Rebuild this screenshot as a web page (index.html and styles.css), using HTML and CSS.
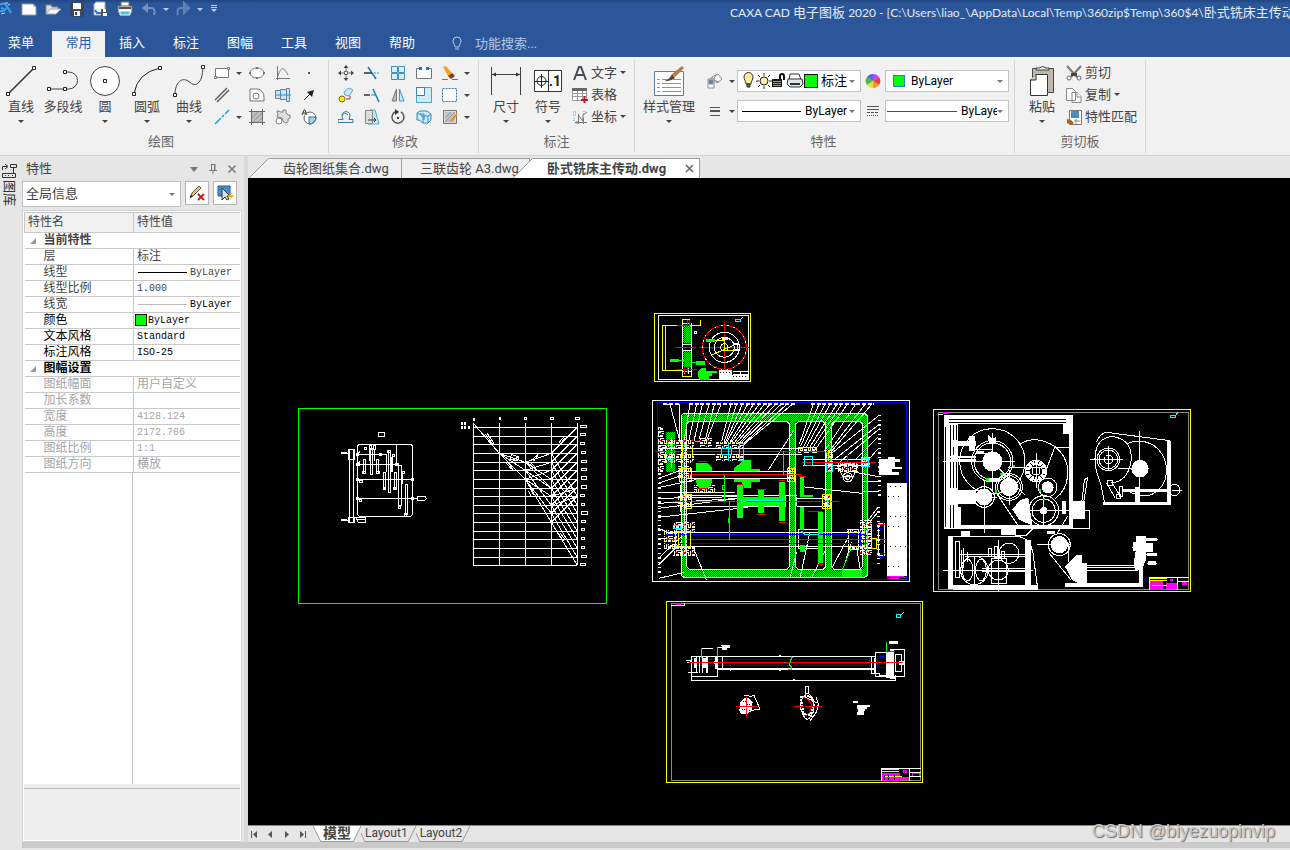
FILE: index.html
```html
<!DOCTYPE html>
<html lang="zh-CN">
<head>
<meta charset="utf-8">
<title>CAXA CAD 电子图板 2020</title>
<link rel="stylesheet" href="styles.css">
</head>
<body>
<header class="top">
  <div class="titlebar">
    <div class="quick">
      <svg class="logo" width="12" height="18" viewBox="0 0 12 18" fill="none"><path d="M0 5q5-4 8 3l3 5M0 11q5 1 7-4M1 8l3 1" stroke="#38a3f2" stroke-width="2"/><path d="M5 3l3 0M8 5l2-1M1 14l4-1" stroke="#b9dcf7"/></svg>
      <button aria-label="新建"><svg width="18" height="18" viewBox="0 0 18 18"><path d="M2 4h11l3 3v8H2z" fill="#fff" stroke="#999"/><path d="M13 4v3h3" fill="#ccc"/></svg></button>
      <button aria-label="打开"><svg width="18" height="18" viewBox="0 0 18 18"><path d="M2 14V5h5l1 2h6v2" fill="#ddd" stroke="#888"/><path d="M2 14l4-5h11l-5 5z" fill="#f4f4f4" stroke="#aaa"/></svg></button>
      <button aria-label="保存"><svg width="18" height="18" viewBox="0 0 18 18"><path d="M3 3h12v13H3z" fill="#444b56" stroke="#363b43"/><path d="M5 3h8v6H5z" fill="#fff"/><path d="M6 11h6v5H6z" fill="#eee"/><path d="M7 12h2v3H7z" fill="#444"/></svg></button>
      <button aria-label="另存为"><svg width="18" height="18" viewBox="0 0 18 18"><path d="M4 2h9v13H2V4z" fill="#fff" stroke="#aaa"/><path d="M3 10l2 3 4 0" fill="none" stroke="#2879bb" stroke-width="2"/><path d="M9 9h7v7H9z" fill="#555"/><path d="M11 9h3v3h-3zM11 13h4v3h-4z" fill="#fff"/></svg></button>
      <button aria-label="打印"><svg width="18" height="18" viewBox="0 0 18 18"><path d="M5 2h8v5H5z" fill="#fff" stroke="#777"/><path d="M2 6h14v7H2z" fill="#eee" stroke="#656565"/><path d="M3 8h12" stroke="#555" stroke-width="2"/><path d="M4 11h10v4H4z" fill="#43c4eb" stroke="#fff"/></svg></button>
      <button aria-label="撤销"><svg width="18" height="18" viewBox="0 0 18 18"><path d="M3 8h8q5 0 3 7" fill="none" stroke="#7691bf" stroke-width="2"/><path d="M2 8l6-5v10z" fill="#7691bf"/></svg></button>
      <button class="caret" aria-label="撤销列表"><i class="arrow pale"></i></button>
      <button aria-label="重做"><svg width="18" height="18" viewBox="0 0 18 18"><path d="M15 8H7q-5 0-3 7" fill="none" stroke="#6583b7" stroke-width="2"/><path d="M15 8l-5-5v10z" fill="none" stroke="#6583b7" stroke-width="2"/></svg></button>
      <button class="caret" aria-label="重做列表"><i class="arrow pale"></i></button>
      <button class="caret more" aria-label="自定义工具栏"><svg width="8" height="8" viewBox="0 0 8 8"><path d="M1 .5h6M1 2.500h6" stroke="#c5cfe0"/><path d="M1 4h6L4 7z" fill="#c5cfe0"/></svg></button>
    </div>
    <h1>CAXA CAD <span>电子图板</span> 2020 - [C:\Users\liao_\AppData\Local\Temp\360zip$Temp\360$4\<span>卧式铣床主传动</span>.dwg]</h1>
  </div>
  <nav class="menu">
    <button>菜单</button><button class="on">常用</button><button>插入</button><button>标注</button><button>图幅</button><button>工具</button><button>视图</button><button>帮助</button>
    <label class="search"><svg width="12" height="16" viewBox="0 0 12 16" fill="none" stroke="#b6c7e2"><path d="M4 11C4 8 2 8 2 5a4 4 0 018 0c0 3-2 3-2 6zM4 13h4"/></svg><input type="text" placeholder="功能搜索..." aria-label="功能搜索"></label>
  </nav>
</header>

<section class="ribbon">
  <div class="group draw">
    <div class="group-body">
      <button class="big"><svg width="32" height="32" viewBox="0 0 32 32"><path d="M3 29L29 3" stroke="#33363f" stroke-width="1.6"/><g class="node"><path d="M1.500 27.500h3v3h-3zM27.500 1.500h3v3h-3z"/></g></svg>直线<i class="arrow"></i></button>
      <button class="big"><svg width="32" height="32" viewBox="0 0 32 32"><path d="M2 24h20a8.500 8.500 0 000-17h-4" fill="none" stroke="#444"/><g class="node"><path d="M.5 22.500h3v3h-3zM16.500 22.500h3v3h-3zM16.500 5.500h3v3h-3z"/></g></svg>多段线<i class="arrow none"></i></button>
      <button class="big"><svg width="32" height="32" viewBox="0 0 32 32"><circle cx="16" cy="16" r="14.500" fill="#fff" stroke="#40424a"/><path class="node" d="M14.500 14.500h3v3h-3z"/></svg>圆<i class="arrow"></i></button>
      <button class="big"><svg width="32" height="32" viewBox="0 0 32 32"><path d="M3 29Q6 8 29 3" fill="none" stroke="#222"/><path class="node" d="M1.500 27.500h3v3h-3zM27.500 1.500h3v3h-3z"/></svg>圆弧<i class="arrow"></i></button>
      <button class="big"><svg width="32" height="32" viewBox="0 0 32 32"><path d="M2 30C2 17 9 12 15 16c5 4 8 5 11 1 3-3 3-7 4-14" fill="none" stroke="#444"/><path class="node" d="M.5 28.500h3v3h-3zM28.500 .5h3v3h-3z"/></svg>曲线<i class="arrow"></i></button>
      <div class="small-grid draw-grid">
        <button aria-label="矩形"><svg width="16" height="16" viewBox="0 0 16 16"><path d="M1.500 3.500h13v9h-13z" fill="#fff" stroke="#777"/><path d="M.5 11.500h2v2h-2zM13.500 2.500h2v2h-2z" fill="#eee" stroke="#777"/></svg><i class="arrow"></i></button>
        <button aria-label="椭圆"><svg width="16" height="16" viewBox="0 0 16 16"><ellipse cx="8" cy="8" rx="7" ry="5" fill="#fff" stroke="#777"/><path d="M7 2h2v2H7zM7 12h2v2H7zM0 7h2v2H0zM14 7h2v2h-2z" fill="#777"/></svg></button>
        <button aria-label="公式曲线"><svg width="16" height="16" viewBox="0 0 16 16" fill="none" stroke="#777"><path d="M2.500 1v14M1 13.500h14M3 11C6 1 9 2 13 10"/></svg></button>
        <button aria-label="点"><svg width="16" height="16" viewBox="0 0 16 16"><path d="M7 7h2v2H7z" fill="#555"/></svg></button>
        <button aria-label="平行线"><svg width="16" height="16" viewBox="0 0 16 16" stroke="#555" stroke-width="1.300"><path d="M1 13L13 1M3 15L15 3"/></svg></button>
        <button aria-label="轮廓"><svg width="16" height="16" viewBox="0 0 16 16" fill="#fff" stroke="#777"><path d="M1 2h8q6 2 6 8v4H1z"/><circle cx="7" cy="9" r="3"/></svg></button>
        <button aria-label="轴"><svg width="16" height="16" viewBox="0 0 16 16" fill="#c9e5f8" stroke="#6c829a"><path d="M.5 3.500h5v8h-5zM5.500 2.500h6v10h-6zM11.500 1.500h3v13h-3z"/><path d="M0 8h16" stroke="#2490db"/></svg></button>
        <button aria-label="箭头"><svg width="16" height="16" viewBox="0 0 16 16"><path d="M3 13l6-6" stroke="#222"/><path d="M13 3l-2 7-5-5z" fill="#222"/></svg></button>
        <button aria-label="构造线"><svg width="16" height="16" viewBox="0 0 16 16"><path d="M1 15l6-6M8 8l2-2M11 5l4-4" stroke="#1ba1e2" stroke-width="1.500"/></svg><i class="arrow"></i></button>
        <button aria-label="填充"><svg width="16" height="16" viewBox="0 0 16 16"><path d="M3 3h10v10H3z" fill="#bdbdbd"/><path d="M2.500 0v16M0 2.500h16M13.500 0v16M0 13.500h16" stroke="#666"/><path d="M3 9l6-6M4 13l9-9M9 13l4-4" stroke="#999"/></svg></button>
        <button aria-label="齿轮"><svg width="16" height="16" viewBox="0 0 16 16" fill="#ddd" stroke="#7d8389"><path d="M2 2h2l1 1h3V1h3v3l2 2h2v3l-2 1v3l-3 1-2-2-1-3-5-1 1-3-1-2z"/><circle cx="4" cy="12" r="3" fill="#fff"/></svg></button>
        <button aria-label="局部放大"><svg width="16" height="16" viewBox="0 0 16 16" fill="#fff" stroke="#4d6577"><circle cx="9" cy="9" r="6"/><path d="M8 8h7a7 7 0 01-7 7z" fill="#9bd8f3"/><path d="M1 6l2-5h1l2 5M2 4h3" stroke="#333" fill="none"/></svg></button>
      </div>
    </div>
    <div class="group-name">绘图</div>
  </div>
  <div class="group modify">
    <div class="group-body">
      <div class="small-grid modify-grid">
        <button aria-label="平移"><svg width="16" height="16" viewBox="0 0 16 16"><path d="M8 0l2.500 3h-5zM8 16l2.500-3h-5zM0 8l3-2.500v5zM16 8l-3-2.500v5z" fill="#444"/><path d="M6.500 6.500h3v3h-3z" fill="#fff" stroke="#666"/><path d="M8 3v3M8 10v3M3 8h3M10 8h3" stroke="#777"/></svg></button>
        <button aria-label="裁剪"><svg width="16" height="16" viewBox="0 0 16 16" stroke-width="1.500"><path d="M4 2l8 12" stroke="#1778be"/><path d="M0 8h8" stroke="#333"/><path d="M10 8h6" stroke="#49b6ed" stroke-dasharray="2 1"/></svg></button>
        <button aria-label="阵列"><svg width="16" height="16" viewBox="0 0 16 16" fill="#d4effb" stroke="#4490bd"><path d="M1.500 1.500h6v6h-6zM8.500 1.500h6v6h-6zM1.500 8.500h6v6h-6zM8.500 8.500h6v6h-6z"/></svg></button>
        <button aria-label="打断"><svg width="16" height="16" viewBox="0 0 16 16"><path d="M5 3.500H.5v10h15v-10H11" fill="#fff" stroke="#777"/><path d="M3 2h3v3H3zM10 2h3v3h-3z" fill="#1878ba"/></svg></button>
        <button aria-label="删除"><svg width="16" height="16" viewBox="0 0 16 16"><path d="M1 2l3-1 6 7-4 3z" fill="#f7a316"/><path d="M6 11l4-3 3 3-4 3z" fill="#833c27"/><path d="M0 14.500h6M10 14.500h6" stroke="#777"/></svg><i class="arrow"></i></button>
        <button aria-label="复制"><svg width="16" height="16" viewBox="0 0 16 16"><circle cx="4" cy="12" r="3" fill="#ffec00" stroke="#776d22"/><path d="M6 5l5-4 4 2-4 6-4-1z" fill="#c8e9fa" stroke="#4bacd9"/><path d="M8 12h4V9" fill="none" stroke="#b52628"/></svg></button>
        <button aria-label="延伸"><svg width="16" height="16" viewBox="0 0 16 16" stroke-width="1.500"><path d="M9 2l6 13" stroke="#1778be"/><path d="M0 8h6" stroke="#333"/><path d="M7 8h4" stroke="#49b6ed"/></svg></button>
        <button aria-label="镜像"><svg width="16" height="16" viewBox="0 0 16 16"><path d="M6.500 2v12H2z" fill="#bcbcbc" stroke="#777"/><path d="M9.500 2v12H14z" fill="#bfe9fd" stroke="#4297c0"/></svg></button>
        <button aria-label="缩放"><svg width="16" height="16" viewBox="0 0 16 16"><path d="M.5 .5h15v15H.5z" fill="#ccecf9" stroke="#4f9eca"/><path d="M.5 .5h8v8h-8z" fill="#fff" stroke="#3c7fa8"/></svg></button>
        <button aria-label="分解"><svg width="16" height="16" viewBox="0 0 16 16"><path d="M.5 1.500h14v13H.5z" fill="#fff" stroke="#3b75a0" stroke-dasharray="2 1"/></svg><i class="arrow"></i></button>
        <button aria-label="等距线"><svg width="16" height="16" viewBox="0 0 16 16" fill="none" stroke="#367ba6"><path d="M0 13.500h15v-3h-4q3-7-3-8-6 1-3 8H0v3M4 7q2-5 6-1"/></svg></button>
        <button aria-label="拉伸"><svg width="16" height="16" viewBox="0 0 16 16"><path d="M6 1h5l4 14H4z" fill="#c9eafa" stroke="#4da8d0"/><path d="M1.500 1.500h7v13h-7z" fill="#ddd" stroke="#888"/><path d="M4 11h8M10 9l2 2-2 2" fill="none" stroke="#333"/></svg></button>
        <button aria-label="旋转"><svg width="16" height="16" viewBox="0 0 16 16"><path d="M6 2.500a6 6 0 105 .5" fill="none" stroke="#555" stroke-width="1.500"/><path d="M5 0l4 3-4 3z" fill="#333"/><path d="M7 8h2v2H7z" fill="#333"/></svg></button>
        <button aria-label="块"><svg width="16" height="16" viewBox="0 0 16 16" fill="#cceefb" stroke="#3589bb"><path d="M1 4l3-2h7l4 3v6l-3 3H7l-4-3H1zM1 5h7v6M5 7h7l3-2M7 14V8l-3-3M12 14V7"/></svg></button>
        <button aria-label="编辑填充"><svg width="16" height="16" viewBox="0 0 16 16"><path d="M1.500 1.500h13v13h-13z" fill="#ddd" stroke="#777"/><path d="M3 3h10v10H3z" fill="#c2c2c2"/><path d="M3 9l6-6M3 13L13 3M7 13l6-6" stroke="#999"/><path d="M9 12l6-7" stroke="#e99020" stroke-width="2"/></svg><i class="arrow"></i></button>
      </div>
    </div>
    <div class="group-name">修改</div>
  </div>
  <div class="group annotate">
    <div class="group-body">
      <button class="big"><svg width="32" height="32" viewBox="0 0 32 32"><path d="M1.500 2v28M30.500 2v28M2 9.500h28" stroke="#3d424a"/><path d="M2 9.500l4-2v4zM30 9.500l-4-2v4z" fill="#333"/></svg>尺寸<i class="arrow"></i></button>
      <button class="big"><svg width="32" height="32" viewBox="0 0 32 32"><path d="M2.500 5.500h27v21h-27zM16.500 5v21" fill="#fff" stroke="#333"/><circle cx="9.500" cy="16" r="4.500" fill="none" stroke="#222"/><path d="M3 16.500h13M9.500 9v14" stroke="#222"/><text x="17" y="21" font-size="14" font-weight="700" fill="#222">.1</text></svg>符号<i class="arrow"></i></button>
      <div class="small-list">
        <button><svg width="16" height="16" viewBox="0 0 16 16" fill="none" stroke="#444b54" stroke-width="2"><path d="M2 15L7 2h2l5 13M4 10h8"/></svg>文字<i class="arrow"></i></button>
        <button><svg width="16" height="16" viewBox="0 0 16 16"><path d="M.5 1.500h14v12H.5zM1 6.500h14M1 9.500h14M5.500 2v12M10.500 2v12" fill="#fff" stroke="#999"/><path d="M0 1h15v3H0z" fill="#666"/><path d="M9 13h7M12.500 9v7" stroke="#b62126" stroke-width="2"/></svg>表格</button>
        <button><svg width="16" height="16" viewBox="0 0 16 16" fill="none" stroke="#777"><path d="M6.500 5v10M3 13.500h12M7 7l4 5V6l4-3M11.500 9v6"/><path d="M1 3h3M1 6h3M2 9v4M5 15v-3M12 2v4" stroke="#4a99cc" stroke-dasharray="1 1"/></svg>坐标<i class="arrow"></i></button>
      </div>
    </div>
    <div class="group-name">标注</div>
  </div>
  <div class="group props">
    <div class="group-body">
      <button class="big"><svg width="32" height="32" viewBox="0 0 32 32"><path d="M1.500 6.500h29v24h-29z" fill="#fff" stroke="#607e9b"/><path d="M4 14.500h3M4 18.500h3M4 22.500h3M4 26.500h3M9 14.500h7M20 14.500h8M9 18.500h19M9 22.500h19M9 26.500h19" stroke="#8297ab"/><path d="M29 1l2 2-9 9-3-3z" fill="#b8793d"/><path d="M19 9l3 4q-5 4-10 3 5-2 7-7z" fill="#664027"/></svg>样式管理<i class="arrow"></i></button>
      <div class="prop-grid">
        <button aria-label="图层"><svg width="16" height="16" viewBox="0 0 16 16" fill="#fff" stroke="#8a8a8a"><path d="M5 4l6-3 4 5-5 4zM5 4l-3 4 5 2M9 2l-3 5 6 2"/><path d="M1 6h6v9H1z"/><path d="M2 7h4v4H2z" fill="#4e83a9"/></svg><i class="arrow"></i></button>
        <div class="combo layer">
          <svg width="14" height="18" viewBox="0 0 14 18"><path d="M4 12C4 9 2 8 2 5a4.500 4.500 0 019 0c0 3-2 4-2 7z" fill="#ffed96" stroke="#333"/><path d="M5 12h3v3H5z" fill="#777" stroke="#222"/></svg>
          <svg width="16" height="18" viewBox="0 0 16 18"><circle cx="8" cy="9" r="4" fill="#ffefab" stroke="#222"/><path d="M8 1v3M8 14v3M0 9h3M13 9h3M2 3l2 2M12 13l2 2M2 15l2-2M12 5l2-2" stroke="#333"/></svg>
          <svg width="14" height="18" viewBox="0 0 14 18"><path d="M8 9V4q0-2 2-2t2 2v4" fill="none" stroke="#111" stroke-width="2"/><path d="M0 7h10v8H0z" fill="#17170d"/><path d="M1 9.500h8M1 11.500h8M1 13.500h8" stroke="#b5a43c"/></svg>
          <svg width="18" height="18" viewBox="0 0 18 18"><path d="M4 2h9l2 6H3z" fill="#fff" stroke="#333"/><path d="M2 7h14l1 5-3 3H4l-3-3z" fill="#dfe5e9" stroke="#333"/><path d="M4 12h10" stroke="#333" stroke-width="2"/></svg>
          <i class="swatch"></i>
          <select aria-label="图层"><option>标注</option></select><i class="arrow grey"></i>
        </div>
        <svg width="16" height="16" viewBox="0 0 16 16"><path d="M8 8V1a7 7 0 016 3z" fill="#c743ea"/><path d="M8 8l6-4a7 7 0 010 8z" fill="#ef3d3d"/><path d="M8 8l6 4a7 7 0 01-6 3z" fill="#f29820"/><path d="M8 8v7a7 7 0 01-6-3z" fill="#f5db36"/><path d="M8 8l-6 4a7 7 0 010-8z" fill="#46bc42"/><path d="M8 8L2 4a7 7 0 016-3z" fill="#4c68e9"/></svg>
        <div class="combo color"><i class="swatch blue"></i><select aria-label="颜色"><option>ByLayer</option></select><i class="arrow grey"></i></div>
        <button aria-label="线宽列表"><svg width="16" height="16" viewBox="0 0 16 16" stroke="#555"><path d="M3 4.500h10M3 12.500h10"/><path d="M3 8h10" stroke-width="2"/></svg><i class="arrow"></i></button>
        <div class="combo"><i class="line"></i><select aria-label="线宽"><option>ByLayer</option></select><i class="arrow grey"></i></div>
        <svg width="16" height="16" viewBox="0 0 16 16" stroke="#555"><path d="M2 3.500h12M2 6.500h12" /><path d="M2 9.500h12" stroke-dasharray="3 1"/><path d="M2 12.500h12" stroke-dasharray="1 1"/></svg>
        <div class="combo"><i class="line red"></i><select aria-label="线型"><option>ByLayer</option></select><i class="arrow grey"></i></div>
      </div>
    </div>
    <div class="group-name">特性</div>
  </div>
  <div class="group clip">
    <div class="group-body">
      <button class="big"><svg width="32" height="32" viewBox="0 0 32 32"><path d="M6.500 3.500h21v24h-21z" fill="#c1b8ac" stroke="#484848"/><path d="M10 5V3h3q4-3 7 0h3v2z" fill="#fff" stroke="#333"/><path d="M10 9.500h11.500v21h-17V15z" fill="#fff" stroke="#333"/><path d="M10 9v6H4" fill="#ccc" stroke="#333"/></svg>粘贴<i class="arrow"></i></button>
      <div class="small-list">
        <button><svg width="16" height="16" viewBox="0 0 16 16"><path d="M1 1l10 11M15 1L5 12" stroke="#777" stroke-width="2"/><path d="M5 8h6v3H5z" fill="#444"/><g fill="#fff" stroke="#666"><circle cx="3" cy="13" r="2"/><circle cx="13" cy="13" r="2"/></g></svg>剪切</button>
        <button><svg width="16" height="16" viewBox="0 0 16 16" fill="#fff" stroke="#888"><path d="M.5 1.500h6l3 3v9h-9zM6 5.500h5l4 4v6H6z"/><path d="M11 5v5h4"/></svg>复制<i class="arrow"></i></button>
        <button><svg width="16" height="16" viewBox="0 0 16 16"><path d="M3.500 1.500h12v14h-12z" fill="#fff" stroke="#777"/><path d="M5 2h8v7H5z" fill="#4f8abb"/><path d="M8 12h6M10 10v5" stroke="#888"/><path d="M1 10l4 1 3 3-3 2-4-2z" fill="#ad6024"/></svg>特性匹配</button>
      </div>
    </div>
    <div class="group-name">剪切板</div>
  </div>
</section>

<main class="work">
  <aside class="dock">
    <svg width="16" height="18" viewBox="0 0 16 18" fill="none" stroke="#333"><path d="M1.500 8V4.500H6M4 2l3 2.500L4 7M9.500 2.500h6v3h-6zM12.500 5v6M1.500 11.500h13v4h-13zM4 13.500h1M7 13.500h1M11 13.500h1"/></svg>
    <button>图库</button>
  </aside>
  <aside class="panel">
    <div class="panel-head"><h2>特性</h2>
      <button aria-label="选项"><svg width="10" height="10" viewBox="0 0 10 10"><path d="M1 3h8L5 8z" fill="#777"/></svg></button>
      <button aria-label="固定"><svg width="10" height="10" viewBox="0 0 10 10" fill="none" stroke="#777"><path d="M3.500 0v6M7 0v6M3 .5h4M1 6.500h8M5 7v3M6.500 0v6"/></svg></button>
      <button aria-label="关闭"><svg width="10" height="10" viewBox="0 0 10 10"><path d="M1.500 1.500l7 7M8.500 1.500l-7 7" stroke="#777" stroke-width="1.500"/></svg></button>
    </div>
    <div class="panel-tools">
      <div class="combo"><select aria-label="对象"><option>全局信息</option></select><i class="arrow grey"></i></div>
      <button aria-label="清除选择"><svg width="18" height="18" viewBox="0 0 18 18"><path d="M2 14l2-5 7-7 2 2-7 7z" fill="#f7c45b" stroke="#555"/><path d="M2 14l1-3 2 1z" fill="#222"/><path d="M10 10l6 6M16 10l-6 6" stroke="#c42222" stroke-width="2"/></svg></button>
      <button aria-label="快速选择"><svg width="18" height="18" viewBox="0 0 18 18"><path d="M2 2h12v10H2z" fill="#3e91d8" stroke="#235988"/><path d="M6 4v12l3-3 2 3 2-1-2-3h3z" fill="#ddd" stroke="#333"/><path d="M14 9l-2 4h3l-2 4 5-6h-3l2-2z" fill="#f2aa1b"/></svg></button>
    </div>
    <div class="sheet-box">
      <table>
        <thead><tr><th>特性名</th><th>特性值</th></tr></thead>
        <tbody>
          <tr class="cat"><th colspan="2">当前特性</th></tr>
          <tr><td>层</td><td>标注</td></tr>
          <tr><td>线型</td><td class="lat"><i class="sample"></i>ByLayer</td></tr>
          <tr><td>线型比例</td><td class="lat">1.000</td></tr>
          <tr><td>线宽</td><td class="lat dark"><i class="sample thin"></i>ByLayer</td></tr>
          <tr class="dark"><td>颜色</td><td class="lat color"><i class="swatch mini"></i>ByLayer</td></tr>
          <tr class="dark"><td>文本风格</td><td class="lat">Standard</td></tr>
          <tr class="dark"><td>标注风格</td><td class="lat">ISO-25</td></tr>
          <tr class="cat dark"><th colspan="2">图幅设置</th></tr>
          <tr class="off"><td>图纸幅面</td><td>用户自定义</td></tr>
          <tr class="off"><td>加长系数</td><td></td></tr>
          <tr class="off"><td>宽度</td><td class="lat">4128.124</td></tr>
          <tr class="off"><td>高度</td><td class="lat">2172.786</td></tr>
          <tr class="off"><td>图纸比例</td><td class="lat">1:1</td></tr>
          <tr class="off"><td>图纸方向</td><td>横放</td></tr>
        </tbody>
      </table>
      <div class="blank"></div>
      <div class="hint"></div>
    </div>
  </aside>
  <section class="doc">
    <div class="doc-tabs">
      <button class="dtab first"><svg width="20" height="20" viewBox="0 0 20 20"><path d="M0 20L19.500 .5H20V20z" fill="#efefef"/><path d="M0 20L19.500 .5h.5" fill="none" stroke="#9b9b9b"/></svg><span>齿轮图纸集合.dwg</span></button>
      <button class="dtab second"><span>三联齿轮 A3.dwg</span></button>
      <button class="dtab active"><svg width="20" height="20" viewBox="0 0 20 20"><path d="M0 20L19.500 .5H20V20z" fill="#fff"/><path d="M0 20L19.500 .5h.5" fill="none" stroke="#9b9b9b"/></svg><span>卧式铣床主传动.dwg <svg width="9" height="9" viewBox="0 0 9 9"><path d="M1 1l7 7M8 1L1 8" stroke="#666" stroke-width="1.500"/></svg></span></button>
    </div>
    <div class="canvas">
      <svg class="drawing ratio" width="320" height="210" viewBox="0 0 960 630">
        <path class="g" d="M25.500 25.500h924v585h-924z"/>
        <g class="w">
          <path d="M265 97h19v12h-19zM208 133h154l6 6v204l-6 6H208l-6-6V139zM178 148v219M190 148v219M175 148h18v30h-18zM175 352h18v15h-18zM320 133v60M202 163h88M198 193h120M198 238h172M198 295h184M382 288h22l5 7-5 7h-22zM155 160h20M155 361h20"/>
          <path d="M237 136h6v12h-6zM249 136h6v12h-6zM238 148v36M252 148v36M241 145h6v78h-6zM223 142h6v6h-6zM220 178h7v42h-7zM217 213h9v6h-9zM259 178h7v42h-7zM259 213h9v6h-9zM290 163v54M295 151h6v126h-6zM292 151h9v6h-9zM307 163v54M307 163h6v6h-6zM304 172v45M280 217h7v48h-7zM280 262h6v6h-6zM313 217h7v48h-7zM310 262h9v6h-9zM325 196h10v120h-10zM338 214v39M338 214h6v6h-6zM325 318h6v6h-6zM346 253h6v90h-6zM343 340h7v8h-7zM208 240h9v7h-9zM208 297h7v7h-7zM198 353h28v14h-22zM202 358h24M205 190l6-8M205 160l6-8"/>
          <path d="M550.500 68v428M628.500 68v428M706.500 68v428M784.500 68v428M862.500 68v428M550 82.500h312M550 109.500h312M550 133.500h312M550 160.500h312M550 187.500h312M550 211.500h312M550 238.500h312M550 265.500h312M550 289.500h312M550 316.500h312M550 340.500h312M550 367.500h312M550 394.500h312M550 418.500h312M550 445.500h312M550 472.500h312M550 496.500h312"/>
          <path d="M550 70l78 90 78 78 78 129 78 129M628 160l78 27M628 160l78 51M628 160l78 78M706 187l78-27M706 187l78 51M706 187l78 78M706 211l78-24M706 211l78 54M706 211l78 105M706 238l78-27M706 238l78 51M706 238l78 102"/>
          <path d="M784 160l78-78M784 187l78-78M784 211l78-78M784 238l78-78M784 265l78-78M784 289l78-78M784 316l78-78M784 340l78-78M784 367l78-78M784 160l78 129M784 187l78 129M784 211l78 129M784 238l78 129M784 265l78 129M784 289l78 129M784 316l78 129M784 340l78 132M784 289l78-24M784 316l78-27"/>
          <path d="M586 102l24 34M592 100l22 34M650 190l15 18M656 190l13 18M664 164l22 6-4 12-22-4zM668 184l18-16M725 180l18-16M730 184l14-18M806 130l14-18M811 133l13-20M810 398l15 20M806 402l14 20M714 272l12 20M720 265l10 20M712 188l24 18M720 186l18 18"/>
          <path d="M550 56h4M628 55h4M704 53h6v6h-6zM781 53h9v6h-9zM856 53h13v6h-13zM871 76h19v7h-19zM871 100h16v7h-16zM871 127h13v7h-13zM874 154h13v7h-13zM874 181h16v7h-16zM874 205h16v7h-16zM874 230h16v9h-16zM874 256h16v10h-16zM871 283h13v7h-13zM874 311h10v6h-10zM874 334h19v10h-19zM874 362h13v6h-13zM874 386h10v6h-10zM874 413h10v6h-10zM874 440h10v6h-10zM874 466h16v7h-16zM871 490h16v6h-16z"/>
          <path d="M513 70h20" class="tick"/><path d="M513 83h28" class="tick"/>
        </g>
        <path class="wf" d="M199 159h9v9h-9zM268 160h8v7h-8zM197 189h12v8h-12zM198 235h9v8h-9zM198 291h9v8h-9zM314 188h12v9h-12zM364 235h9v8h-9zM364 291h9v8h-9zM154 157h16v6h-16zM154 358h16v6h-16zM549 54h6v9h-6zM627 51h6v9h-6z"/>
      </svg>

      <svg class="drawing assembly" width="275" height="280" viewBox="0 0 825 840">
        <defs><pattern id="hatch" width="6" height="6" patternUnits="userSpaceOnUse"><path d="M0 0h3v3H0zM3 3h3v3H3z" fill="#0f0"/></pattern>
        <pattern id="speck" width="24" height="21" patternUnits="userSpaceOnUse"><path d="M0 0h12v3H0zM15 3h3v12h-3zM3 6h9v3H3zM0 12h6v6H0zM9 15h9v3H9zM21 0h3v6h-3zM21 12h3v6h-3z" fill="#fff"/><path d="M18 6h6v3h-6z" fill="#f00"/><path d="M9 9h3v6H9z" fill="#ff0"/></pattern></defs>
        <g class="y"><path d="M28.500 25.500h288v204h-288zM112 60H52v136h60M61 60v136M112 60h55V46M112 42h22v12h-22zM112 200h27v13h-27z"/></g>
        <path class="w" d="M40.500 31.500h270v192h-270z"/>
        <path class="hf" d="M112 64h27v50h-27zM112 138h27v48h-27z"/>
        <path class="w" d="M112 55v155M139 55v155M112 117h28M112 136h28M118 190v16M130 190v16M148 79h7v7h-7z"/>
        <path class="r" d="M90 127h63M163 127h148M238 52v145M96 61h36M96 193h60M126 46v20M133 46v20M117 185v20M126 185v20"/>
        <circle class="w" cx="238" cy="127" r="66"/><circle class="r" cx="238" cy="127" r="66" stroke-dasharray="14 5"/><g class="w"><circle cx="238" cy="127" r="45"/><circle cx="238" cy="127" r="30"/><circle cx="238" cy="127" r="11"/></g>
        <path class="y" d="M200 150l77-34v21h-40v-30h-28M212 107h27v9"/>
        <path class="gf" d="M75 162h27v9H75zM153 168h27v12h-27zM183 102h26v8h-26zM160 198l10-9h12v9h34v7h-16v8h-9v13h-25l-7-12z"/><path class="g" d="M102 166h15M142 171h12"/>
        <path class="wf" d="M222 195h40v27h-40zM262 209h48v14h-48zM231 97h18v9h-18zM265 115h16v4h-16zM265 133h16v4h-16z"/><path class="w" d="M265 198h45M287 197v24M265 207h45"/><path d="M226 202h32M264 214h42" stroke="#000" stroke-width="3" stroke-dasharray="3 6"/><path class="c" d="M271 42h14v7h-14zM287 43l6-7"/>

        <path class="w" d="M22.500 286.500h771v543h-771z"/><path class="b" d="M37.500 292.500h748v531h-748z"/>
        <path class="hf" fill-rule="evenodd" d="M110 325h556v492H110zM125 349v444h527V349z"/><path class="hf" d="M434 349h18v444h-18zM542 349h18v444h-18zM62 380h28v120H62z"/>
        <path class="w" d="M117 325h542l8 8v478l-8 6H117l-9-6V333zM133 349h292l9 9v427l-9 8H133l-8-8V357zM461 349h73l8 8v428l-8 8h-73l-9-8V357zM568 349h76l9 8v428l-9 8h-76l-8-8V357z"/>
        <g class="w">
          <path d="M62 298h13l30 112M90 298h12v112M135 298l-18 110M155 298l-25 115M172 298l-25 110M192 298l-30 105M208 298l-28 110M228 298l-42 105M258 298l-28 110M275 298l-38 112M292 298l-50 112M308 298l-62 112M325 298l-70 113M342 298l-82 113M358 298l-90 115M375 298l-100 115M392 298l-112 118M408 298l-122 118M425 298l-132 120M442 298l-145 120"/>
          <path d="M505 298l-42 120M522 298l-55 125M540 298l-65 130M555 298l-72 130M575 298l-83 132M590 298l-90 135M607 298l-97 137M632 298l-95 142M660 298l-110 145M680 298l-124 145M700 333L560 445M700 360L570 462M705 370L585 470M700 395l-70 70M700 430l-30 35M447 375l-77 120"/>
          <path d="M40 520l70-25M40 535l75-25M40 548l130-28M40 562h230M40 580l240-5M40 595l240-15M40 610l245-30M40 637l270-30M40 670l50 20M40 700h40M40 760l70-65M40 780l70-70M42 820l75-18M145 728l40 98M435 820l20-80M465 820l30-140M500 818l40-80M560 790l48-90M595 790l25-80M650 820l-15-90M700 605l-30 40M700 620l-25 30M470 545l180 20M650 530h50M655 560h48M570 490l130 25"/>
          <path d="M40 430h430M40 448h430M125 499h320M125 520h320M125 571h330M125 604h160M455 579h88M455 603h88M475 464h195M475 480h195M70 683h590M70 723h590M434 640v140M452 640v140M60 420v55M78 400v90M117 440v250M105 540v80M461 674h70v56h-70zM455 577v25M282 571h140v33H282zM610 672h30v60h-30zM434 505v65M452 505v65M542 500v50M560 500v50M700 655h18v95h-18z"/>
        </g>
        <g class="speckle"><path d="M42 405h105v25H42zM42 448h105v27H42zM162 400h40v25h-40zM210 410h88v20h-88zM210 448h88v20h-88zM460 425h55v20h-55zM57 675h40v60H57zM85 650h65v32H85zM85 724h65v28H85zM605 670h60v14h-60zM605 722h60v14h-60zM645 645h35v105h-35zM100 480h38v40h-38zM425 485h25v40h-25zM530 570h28v40h-28zM40 365h18v140H40zM580 470h58v32h-58zM540 435h25v65h-25zM648 455h28v30h-28zM148 540h65v20h-65zM100 570h40v40h-40z"/></g>
        <path class="gf" d="M154 474h33l15 14v10h-48zM154 522h48v9l-12 18h-28l-8-16zM268 490l28-25h21v26h28v7h-77zM268 522h77v8h-28v20h-18l-10-20h-21zM275 539h20v38h106V530h19v118h-19v-46H294v38h-19zM338 556h20v20h-20zM338 603h20v21h-20zM465 515h13v54h25v8h-38zM465 605h13v70h-13zM518 620h15v155h-15zM465 720h15v20h-15zM590 795h60v21h-60z"/>
        <path class="r" d="M30 439h510M130 509h337M84 589h498M63 703h660M472 472h221M608 450v85M585 517h45M160 469h25M155 549h30M280 537h15M335 552h28M335 627h28M403 527h17M403 652h20M462 515h20M490 618h42M515 778h20M695 657h24M695 745h24"/>
        <path class="b" d="M60 688h600M60 715h600M646 680v40M662 680v40M696 650h20v20h-20v75h20v10h-20zM675 715h50"/>
        <path class="y" d="M113 418v38M121 418v38M142 425v32M103 490h37v40h-37zM426 490h22v40h-22zM531 568h26v42h-26zM533 568v42M546 568v42M120 568h18v42h-18zM90 680h47v48H90zM100 680v48M120 670v68M679 657v72M679 700h15v30h-15zM550 435v30M466 428h40"/>
        <path class="c" d="M250 418v50M282 415h12v50h-12zM230 430h30v18h-30zM478 455h24v25h-24zM543 475h20v23h-20zM650 460h20v25h-20zM85 660h22v10h-22zM282 580q5 12 20 9M302 585h110v-8M470 678l10 10h40l10-10M122 665v20M667 670v70M150 410h15M65 460h20"/>
        <path class="g" d="M238 509v80M232 542h6v12h-6zM415 439v70M253 589v115M249 640h5v12h-5zM618 730l-26 65"/>
        <g class="w"><circle cx="608" cy="517" r="14"/><circle cx="608" cy="517" r="6"/><path d="M579 485l29-10 29 10-12 30h-32z"/></g>
        <path class="wf" d="M702 462h63v10h-15v14h22v6h-30v10h19v8h-59zM728 455h22v6h-22zM726 534h60v278h-60z"/><path d="M735 545h45M730 574h45M735 634h48M730 664h45M735 724h48M730 784h45" stroke="#000" stroke-width="3" stroke-dasharray="3 12"/><path d="M787 534v278" stroke="#00f" stroke-width="3" stroke-dasharray="12 18"/>
        <path class="w label-row" d="M55 297h50M132 297h318M498 297h190"/><path class="w label-col" d="M44 365v445M702 330v250M700 605v180"/>
        <path class="m" d="M726 815h50M726 821h35"/><path class="r" d="M750 823h35M770 816h16"/>
      </svg>

      <svg class="drawing housing" width="270" height="200" viewBox="0 0 810 600">
        <path class="y" d="M25.500 28.500h771v546h-771z"/><path d="M40.500 37.500h750v531h-750z" fill="none" stroke="#888" stroke-width="3"/>
        <path class="wf" fill-rule="evenodd" d="M57 45h387v341H57zM99 72v303h333V72z"/>
        <path class="wf" d="M413 68h22v34h-22zM440 303h40v53h-40zM68 408h16v160H68zM301 420h17v148h-17zM84 556h254v13H84zM420 549h235v12H420zM641 490h13v70h-13zM534 306h203v9H534zM727 123h10v190h-10zM92 320h16v60H92zM108 393h26v17h-26zM228 386h46v20h-46zM185 233h40v12h-40zM590 267h137v9H590zM631 262h14v48h-14zM367 392h24v9h-24zM285 300l25-8 12 85-40-18-20-30zM420 500l35-35h16v25h14v65h-13l-30-15zM633 408h30v20h20v28h-20v23l-12 30h-22l-2-25 5-30h-8v-28h8z"/>
        <path d="M72 58h352M72 67h352M75 75v190M84 75v45M84 140v25M84 185v80M93 75v45M93 185v80M60 80v300M75 315v70M84 315v70" stroke="#000" stroke-width="3"/>
        <path class="wf" d="M72 270h82v42H72zM75 168h78v5H75zM75 177h78v5H75zM78 122h74v16H78zM152 153h26v9h-26z"/>
        <g class="w">
          <circle cx="202" cy="184" r="98"/><circle cx="202" cy="184" r="62"/><circle cx="202" cy="184" r="55"/><circle cx="252" cy="261" r="40"/><circle cx="252" cy="261" r="34"/><circle cx="177" cy="291" r="31"/><circle cx="333" cy="213" r="32"/><circle cx="333" cy="213" r="12"/><circle cx="368" cy="262" r="28"/><circle cx="356" cy="332" r="45"/><circle cx="356" cy="332" r="35"/><circle cx="550" cy="178" r="34"/><circle cx="550" cy="178" r="28"/><circle cx="550" cy="178" r="13"/><circle cx="403" cy="434" r="33"/><circle cx="748" cy="270" r="17"/><circle cx="252" cy="460" r="30"/><circle cx="220" cy="510" r="30"/><ellipse cx="148" cy="511" rx="41" ry="43"/><ellipse cx="128" cy="510" rx="16" ry="32"/><ellipse cx="168" cy="510" rx="16" ry="32"/>
          <path d="M282 134q48-32 107 5 44 35 39 90-5 45-38 67M389 142l-27 72M390 142h45M150 147h50M150 160h60M202 100v170M55 184h215M333 160v105M250 203h115M177 240v160M120 291h95M252 210v105M356 285v100M296 331h110M300 285l-98-100M218 285l60 90M444 385h50v-55h-50M470 310l8-70 10-8-12 75M400 331h80M270 405h35l30-30M398 398l30-50M373 460l65 80M335 433h103M430 430v55"/>
          <path d="M512 150q-8 50 15 100l12 60M515 125q10-25 30-28l190 25M510 180q0-70 55-70 60 10 53 75-10 60-60 64M605 132q40-20 82 5 40 30 37 80-2 45-45 67-35 10-70-12M495 178h100M550 138v75M580 205h90M644 93v190M545 250l25 43M560 247l25 40M548 240h15v15h-15zM583 260h10v30h-10zM573 283h12v12h-12zM735 253v32M740 270h32"/>
          <path d="M84 410h200q33 8 40 50l14 105M92 424h10v108H92zM108 450v55M114 445v60M127 455v30M104 463h195M120 470h180M55 511h270M148 470v85M198 475h47v75h-47zM170 504h130M170 515h130M220 420v152M190 445h8v25h-8zM208 440h10v32h-10zM230 455h8v20h-8zM470 496h170M470 503h170M470 510h170M660 418h40M620 443h65M660 463h35M665 490h30"/>
        </g>
        <g class="wf"><circle cx="202" cy="184" r="30"/><circle cx="252" cy="261" r="27"/><circle cx="177" cy="291" r="25"/><circle cx="368" cy="262" r="18"/><circle cx="645" cy="206" r="26"/><circle cx="403" cy="434" r="26"/><circle cx="356" cy="332" r="11"/><path d="M133 108h18v45h-18zM188 104l12 12 12-4v20h-20zM660 413h35v9h-35zM665 459h30v10h-30zM670 484h24v12h-24zM410 304h12v38h-12z"/></g>
        <circle cx="333" cy="213" r="24" fill="none" stroke="#fff" stroke-width="12" stroke-dasharray="9 2"/>
        <path class="gf" d="M184 235h7v7h-7zM226 218h7v6h-7zM264 195h6v7h-6zM209 271h8v7h-8zM342 267h6v9h-6zM354 293h7v6h-7z"/>
        <path class="c" d="M736 46h14v6h-14zM752 47l6-10"/><path class="mf" d="M54 36h18v6H54zM674 543h40v26h-40zM723 549h34v17h-34zM736 537h8v7h-8zM771 545h14v9h-14z"/>
        <path class="w" d="M39 43h16M672 532h120M758 532v37M758 544h34M673 532v37"/><path class="y" d="M675 536h50M675 542h50M682 556h44"/>
      </svg>

      <svg class="drawing shaft" width="270" height="195" viewBox="0 0 810 585">
        <path class="y" d="M19.500 19.500h768v543h-768z"/><path d="M34.500 25.500h747v531h-747z" fill="none" stroke="#888" stroke-width="3"/>
        <path class="mf" d="M48 24h15v9H48z"/><path class="w" d="M34 31h40v-7"/><path class="c" d="M709 58h12v9h-12zM722 61l9-9"/>
        <path class="b" d="M94 193.500h535M94 211.500h535M628 187v33M652 187v31M652 187l50-9M652 215l50 9"/>
        <path class="w" d="M94 184.500h550M94 187v69h612v-15M173 184v60H94M187 184v39M170 220.500h474M170 223.500h474M646 172v72h44M690 163h44v81h-44zM706 178h19v52h-19zM109 187v48M118 187v48M126 187v48M138 187v48M142 187v48M78 195h14v7H82M85 232h30M634 184v50M642 190v45M646 172h35M634 235h25v6h20M209 226h3M358 182h5M398 253h7M358 226h4M124 159h35M173 157h12"/>
        <path class="wf" d="M103 190h6v28h-6zM128 190h11v28h-11zM162 198h10v8h-10zM166 184h8v39h-8zM184 150h26v10h-10v4h-14zM679 172h22v78h-22zM690 163h12v20h-12zM717 199h16v10h-16zM688 139h26v7h-26zM123 178h3v8h-3zM690 244h17v7h-17z"/>
        <path class="r" d="M88 202.500h640M683 169h22"/><path class="g" d="M124 159v30M172 157v27M679 142v30M393 184v10l-5 15 5 5v9M398 185l-9 14M385 222h10"/>
        <path class="wf" d="M240 324l12-15h15l11 12-3 26-12 10h-20l-5-10z"/><path d="M248 318h9M262 327h9M246 342h9M266 345h6" stroke="#000" stroke-width="3" stroke-dasharray="3 3"/><path class="w" d="M253 301h15M268 306l14-5 15 34v8l-20 3M436 274h9v20h-9zM440 294l-16 20-3 25 14 30 8 6M447 297l15 18-1 35-15 22M468 305l7 22-5 23-20 28M430 304l40 20M425 353l35 12"/>
        <path class="speckle2" d="M423 307l25-5 15 22-10 33-22 5z"/><path class="r" d="M228 334h62M259 306v60M401 334h85M430 307q30 10 22 35-5 20-20 20" stroke-dasharray="30 3"/>
        <path class="wf" d="M579 318h15v6h-15zM591 330h39v6h-9v6h-6v6h-3v12h-21v-9h4v-10h-4z"/>
        <path class="mf" d="M666 535h54v22h-54zM720 546h29v9h-29z"/><path d="M731 526h7v7h-7zM757 536h20v7h-20z" fill="none" stroke="#f0f" stroke-width="3"/><path class="w" d="M664 520h118M664 520v37M748 520v37M748 532h34M748 544h34"/><path class="y" d="M666 524h52M666 530h52M675 545h50"/><path d="M672 541v15M684 541v15M702 540v15M675 526h40" stroke="#000" stroke-width="3" stroke-dasharray="6 3"/>
      </svg>
    </div>
    <div class="layouts">
      <button aria-label="第一个"><svg width="9" height="9" viewBox="0 0 9 9"><path d="M1 1h1v7H1zM7 1v7L3 4.500z" fill="#555"/></svg></button>
      <button aria-label="上一个"><svg width="9" height="9" viewBox="0 0 9 9"><path d="M6 1v7L2 4.500z" fill="#555"/></svg></button>
      <button aria-label="下一个"><svg width="9" height="9" viewBox="0 0 9 9"><path d="M3 1v7l4-3.500z" fill="#555"/></svg></button>
      <button aria-label="最后一个"><svg width="9" height="9" viewBox="0 0 9 9"><path d="M7 1h1v7H7zM2 1v7l4-3.500z" fill="#555"/></svg></button>
      <button class="ltab model"><svg width="8" height="16" viewBox="0 0 8 16"><path d="M0 0l8 16V0z" fill="#fff"/><path d="M0 0l8 16" stroke="#999"/></svg><span>模型</span><svg width="8" height="16" viewBox="0 0 8 16"><path d="M8 0L0 16V0z" fill="#fff"/><path d="M8 0L0 16" stroke="#999"/></svg></button>
      <button class="ltab"><svg width="4" height="16" viewBox="0 0 4 16"><path d="M0 7l4 9" stroke="#999"/></svg><span>Layout1</span><svg width="8" height="16" viewBox="0 0 8 16"><path d="M8 0L0 16" stroke="#999"/></svg></button>
      <button class="ltab"><svg width="4" height="16" viewBox="0 0 4 16"><path d="M0 7l4 9" stroke="#999"/></svg><span>Layout2</span><svg width="8" height="16" viewBox="0 0 8 16"><path d="M8 0L0 16" stroke="#999"/></svg></button>
    </div>
  </section>
</main>
<footer class="foot"></footer>
<div class="mark">CSDN @biyezuopinvip</div>
</body>
</html>
```
FILE: styles.css
```css
* { box-sizing: border-box; }
body {
  margin: 0;
  height: 100vh;
  display: flex;
  flex-direction: column;
  overflow: hidden;
  position: relative;
  background: #e6e6e6;
  color: #444;
  font: 13px/20px Roboto, "Noto Sans CJK SC", sans-serif;
}
button, select, input { font: inherit; color: inherit; }
button { background: none; border: 0; padding: 0; white-space: nowrap; }
svg { flex: none; display: block; }
h1, h2 { margin: 0; font-weight: 400; }

.arrow { flex: none; border: 3px solid transparent; border-top-color: #444; border-bottom: 0; width: 6px; height: 3px; }
.arrow.none { visibility: hidden; }
.arrow.pale { border-top-color: #c5cfe0; }
.arrow.grey { border-top-color: #777; }

.top { background: #2b579a; color: #fff; }
.titlebar { display: flex; height: 31px; background: linear-gradient(#204680, #2b579a 4px); }
.quick { display: flex; width: 730px; flex: none; height: 18px; }
.quick button { width: 24px; display: flex; align-items: center; justify-content: center; }
.quick .logo { margin-right: 5px; }
.quick .caret { width: 10px; }
.quick .more { width: 18px; }
.titlebar h1 { flex: 1; min-width: 0; overflow: hidden; white-space: nowrap; font: 12px/24px Lato, "Noto Sans CJK SC", sans-serif; color: #e4eaf3; }
.titlebar h1 span { font-size: 13px; }
.menu { display: flex; height: 26px; }
.menu button { width: 54px; padding-bottom: 2px; }
.menu button:first-child { width: 52px; padding-right: 10px; }
.menu .on { width: 53px; background: #f1f1f1; color: #1f5fb4; }
.search { display: flex; align-items: center; margin-left: 22px; gap: 12px; }
.search input { background: none; border: 0; padding: 0; width: 120px; outline: 0; }
.search input::placeholder { color: #b6c7e2; opacity: 1; }

.ribbon { display: flex; height: 99px; background: #f1f1f1; border-top: 1px solid #fafafa; border-bottom: 1px solid #d2d2d2; }
.group { display: flex; flex-direction: column; border-right: 1px solid #d5d5d5; margin: 2px 0; flex: none; }
.group-body { display: flex; height: 71px; }
.group-name { text-align: center; line-height: 22px; color: #666; padding-right: 6px; }
.draw { width: 329px; }
.modify { width: 150px; padding-left: 9px; }
.annotate { width: 156px; padding-left: 6px; }
.props { width: 380px; padding-left: 4px; }
.clip { width: 131px; padding-left: 6px; }
.big { width: 42px; flex: none; display: flex; flex-direction: column; align-items: center; padding-top: 5px; }
.props .big { width: 60px; }
.big .arrow { margin-top: 3px; }
.node { fill: #fff; stroke: #222; }
.small-grid { display: grid; grid-auto-rows: 22px; padding-top: 2px; }
.draw-grid { grid-template-columns: 35px 26px 26px 26px; padding-left: 4px; }
.modify-grid { grid-template-columns: 26px 26px 26px 26px 32px; }
.small-grid button, .small-list button, .prop-grid button { display: flex; align-items: center; gap: 6px; }
.small-list { display: flex; flex-direction: column; padding: 2px 0 0 3px; }
.small-list button { height: 22px; gap: 3px; padding-bottom: 1px; }
.prop-grid { display: grid; grid-template-columns: 26px 124px 16px 124px; grid-auto-rows: 22px; gap: 8px 4px; padding: 10px 0 0 8px; align-items: center; }
.combo { display: flex; align-items: center; background: #fff; border: 1px solid #c3c3c3; height: 22px; padding: 0 5px 0 4px; color: #000; font-size: 12px; }
.combo select { appearance: none; border: 0; background: none; padding: 0; flex: 1; min-width: 0; overflow: hidden; text-overflow: clip; outline: 0; }
.layer select { padding-left: 3px; font-size: 13px; }
.swatch { flex: none; width: 14px; height: 14px; background: #0f0; border: 1px solid #111; }
.swatch.blue { width: 12px; height: 12px; border-color: #2281c9; margin: 0 6px 0 3px; }
.line { flex: none; width: 59px; border-top: 1px solid #000; margin-right: 4px; }
.line.red { width: 70px; border-top-color: #f00; margin-left: -3px; }

.work { flex: 1; min-height: 0; display: flex; }
.dock { width: 22px; display: flex; flex-direction: column; align-items: flex-start; padding: 6px 0 0 1px; }
.dock button { writing-mode: vertical-rl; text-orientation: sideways; font-size: 13px; line-height: 16px; color: #333; }
.panel { width: 226px; border-right: 4px solid #d9d9d9; display: flex; flex-direction: column; padding-right: 2px; flex: none; }
.panel-head { display: flex; align-items: center; height: 25px; padding: 0 5px 0 4px; gap: 9px; }
.panel-head h2 { flex: 1; font-size: 13px; }
.panel-tools { display: flex; gap: 4px; height: 26px; padding-right: 5px; }
.panel-tools .combo { flex: 1; height: 26px; padding-left: 3px; font-size: 13px; color: #444; }
.panel-tools button { width: 24px; height: 24px; background: #fff; border: 1px solid #b5b5b5; display: flex; align-items: center; justify-content: center; }
.sheet-box { margin-top: 3px; flex: 1; border: 1px solid #d4d4d4; background: #fff; padding: 1px; display: flex; flex-direction: column; }
table { border-collapse: collapse; table-layout: fixed; width: 100%; font-size: 12px; line-height: 15px; }
th, td { height: 16px; padding: 0 0 0 3px; border-bottom: 1px solid #c8c8c8; text-align: left; white-space: nowrap; overflow: hidden; }
td:first-child { width: 109px; padding-left: 19px; border-right: 1px solid #c8c8c8; }
thead th { height: 20px; background: #f0f0f0; font-weight: 400; border-top: 1px solid #c8c8c8; border-left: 1px solid #c8c8c8; }
thead th:first-child { width: 109px; }
.cat th { font-weight: 700; padding-left: 5px; }
.cat th::before { content: ""; display: inline-block; border: 3px solid; border-color: transparent #999 #999 transparent; margin-right: 8px; }
.lat { font: 10px/15px "Liberation Mono", monospace; }
.dark { color: #000; }
.off { color: #a5a5a5; }
.sample { display: inline-block; width: 49px; height: 1px; background: #000; vertical-align: middle; margin: 0 3px 0 1px; }
.thin { background: #bbb; }
td.color { padding-left: 1px; }
.swatch.mini { display: inline-block; width: 12px; height: 12px; vertical-align: middle; margin-right: 1px; }
.blank { flex: 1; margin-left: 108px; border-left: 1px solid #c8c8c8; }
.hint { height: 56px; background: linear-gradient(#eee 4px, #bbb 4px, #bbb 5px, #eee 5px); }

.doc { flex: 1; min-width: 0; display: flex; flex-direction: column; }
.doc-tabs { display: flex; height: 22px; padding: 2px 0 0 1px; }
.dtab { display: flex; height: 20px; }
.dtab > span { display: flex; align-items: center; height: 20px; border-top: 1px solid #9b9b9b; border-right: 1px solid #9b9b9b; background: #efefef; }
.first > span { padding: 0 14px; width: 133px; }
.second > span { padding: 0 14px 0 18px; width: 128px; }
.active { margin-left: -17px; position: relative; font-weight: 700; }
.active > span { background: #fff; padding: 0 5px 0 14px; width: 167px; justify-content: space-between; }
.canvas { flex: 1; min-height: 0; background: #000; position: relative; overflow: hidden; }
.drawing { position: absolute; shape-rendering: crispEdges; }
.ratio { left: 42px; top: 222px; }
.assembly { left: 397px; top: 127px; }
.housing { left: 677px; top: 222px; }
.shaft { left: 412px; top: 417px; }
.w, .g, .r, .b, .y, .c, .m { fill: none; stroke-width: 3px; }
.w { stroke: #fff; } .g { stroke: #0f0; } .r { stroke: #f00; } .b { stroke: #00f; } .y { stroke: #ff0; } .c { stroke: #0ff; } .m { stroke: #f0f; }
.wf { fill: #fff; } .gf { fill: #0f0; } .mf { fill: #f0f; } .hf { fill: url(#hatch); }
.speckle { fill: url(#speck); }
.speckle2 { fill: none; stroke: #fff; stroke-width: 6px; stroke-dasharray: 6 3; }
.tick { stroke-width: 8px; stroke-dasharray: 6 4; }
.label-row { stroke-width: 5px; stroke-dasharray: 12 5; }
.label-col { stroke-width: 9px; stroke-dasharray: 4 10; }

.layouts { display: flex; height: 17px; border-top: 1px solid #888; padding-left: 1px; align-items: flex-start; font-size: 12px; line-height: 15px; }
.layouts > button { width: 16px; height: 16px; display: flex; align-items: center; padding-left: 1px; }
.layouts .ltab { width: auto; padding: 0; }
.ltab span { height: 16px; border-bottom: 1px solid #999; }
.ltab.model span { background: #fff; font-weight: 700; font-size: 14px; padding: 0 2px; line-height: 14px; }
.foot { height: 8px; margin-left: 22px; background: linear-gradient(#cacaca 6px, #e6e6e6 6px); flex: none; }
.mark { position: absolute; right: 15px; bottom: 7px; font: 18px/24px "Liberation Sans", sans-serif; color: #c8c8c8; text-shadow: 1px 1px 1px #666; }
```
